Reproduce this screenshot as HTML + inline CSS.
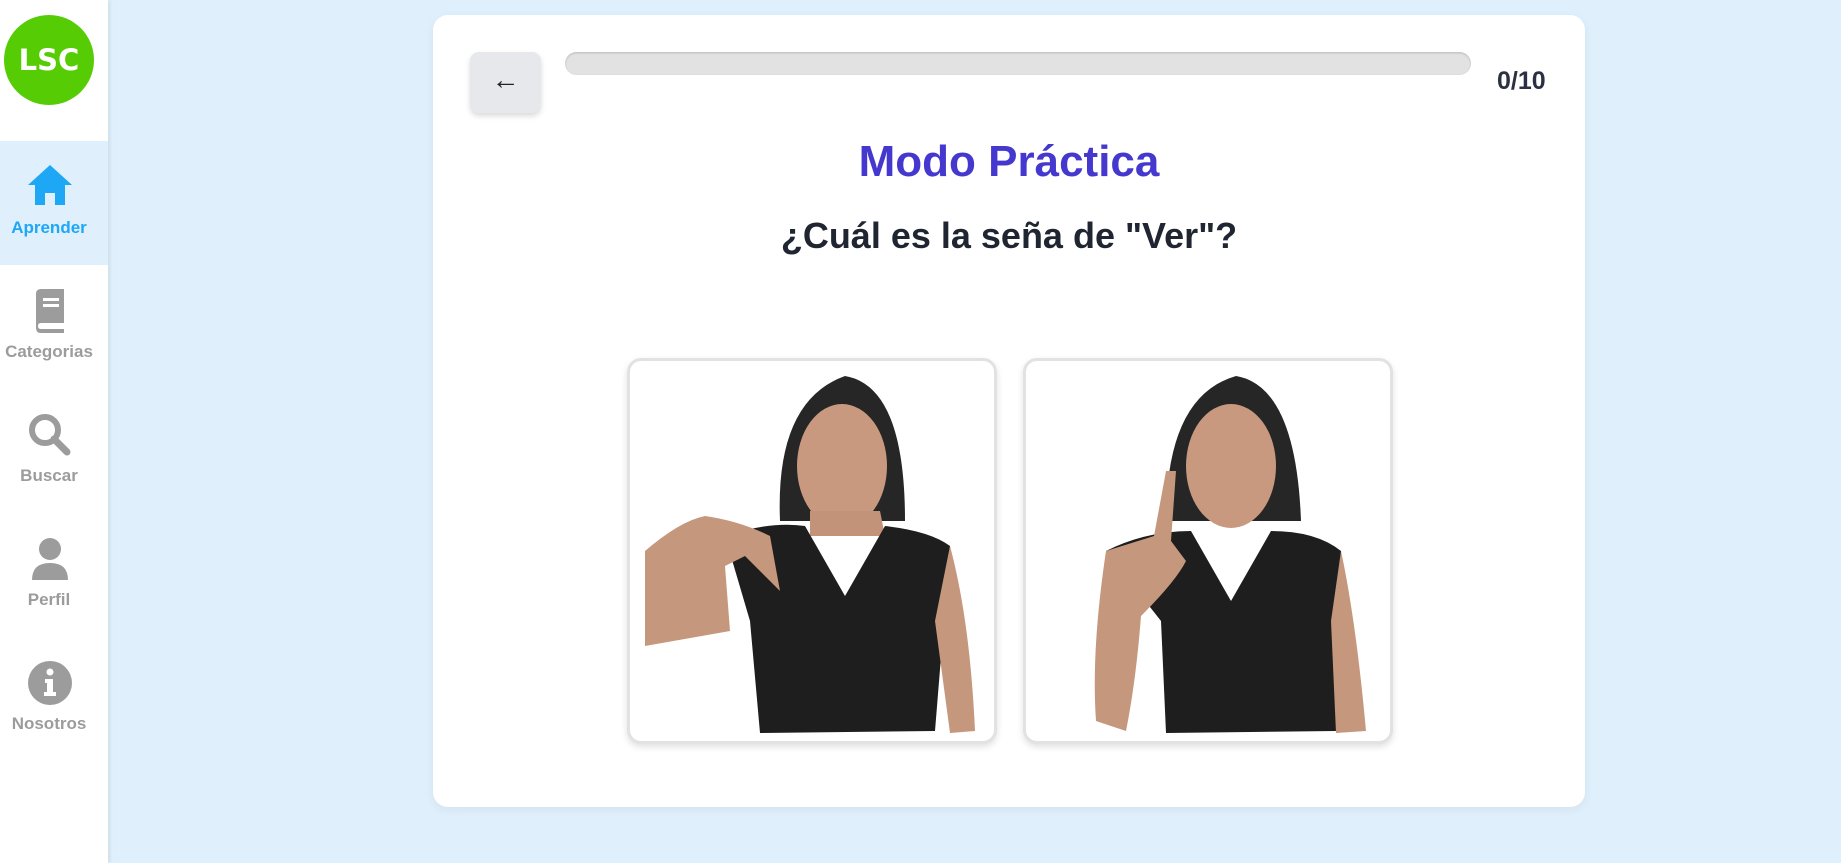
<!DOCTYPE html>
<html><head><meta charset="utf-8"><style>
*{margin:0;padding:0;box-sizing:border-box}
body{width:1841px;height:863px;background:#dff0fc;font-family:"Liberation Sans",sans-serif;position:relative;overflow:hidden}
.side{position:absolute;left:0;top:0;width:108px;height:863px;background:#fff;box-shadow:2px 0 4px rgba(0,0,0,.08)}
.logo{position:absolute;left:4px;top:15px;width:90px;height:90px;border-radius:50%;background:#56cc05;color:#fff;font-size:29px;font-weight:bold;display:flex;align-items:center;justify-content:center;font-family:"DejaVu Sans","Liberation Sans",sans-serif}
.item{position:absolute;left:-5px;width:108px;height:124px;text-align:center;color:#9c9c9c;font-weight:bold;font-size:17px}
.item svg{position:absolute;left:31px;top:22px}
.item span{position:absolute;left:0;right:0;top:77px}
.item.on{background:#dff0fc;color:#1ea7f5;left:0}
.item.on svg{left:26px}
.item.on span{left:-10px}
.card{position:absolute;left:433px;top:15px;width:1152px;height:792px;background:#fff;border-radius:15px;box-shadow:0 3px 10px rgba(0,0,0,.06)}
.back{position:absolute;left:37px;top:37px;width:71px;height:61px;background:#e7e8ec;border-radius:9px;box-shadow:0 3px 6px rgba(0,0,0,.15);font-size:28px;color:#222;display:flex;align-items:center;justify-content:center;padding-bottom:6px}
.bar{position:absolute;left:132px;top:37px;width:906px;height:23px;background:#e2e2e2;border-radius:12px;box-shadow:inset 0 1px 2px rgba(0,0,0,.18)}
.cnt{position:absolute;left:1064px;top:52px;font-size:25px;font-weight:bold;color:#2b3140}
h1{position:absolute;left:0;right:0;top:122px;text-align:center;font-size:44px;color:#4538cf}
h2{position:absolute;left:0;right:0;top:200px;text-align:center;font-size:36px;color:#1f2632}
.opt{position:absolute;top:343px;width:370px;height:386px;border:3px solid #e2e2e2;border-radius:14px;box-shadow:0 3px 7px rgba(0,0,0,.12);background:#fff;overflow:hidden}
</style></head><body>
<div class="side">
<div class="logo">LSC</div>
<div class="item on" style="top:141px"><svg width="48" height="44" viewBox="0 0 48 44"><path d="M24 2 L2 22 H9 V42 H19 V30 H29 V42 H39 V22 H46 Z" fill="#1ea7f5"/></svg><span>Aprender</span></div>
<div class="item" style="top:265px"><svg width="48" height="48" viewBox="0 0 48 48"><path d="M10 7 Q10 2 15 2 H38 V36 H15 Q12 36 12 39 Q12 42 15 42 H38 V46 H15 Q10 46 10 41 Z" fill="#9c9c9c"/><rect x="17" y="11" width="16" height="3" fill="#fff"/><rect x="17" y="17" width="16" height="3" fill="#fff"/></svg><span>Categorias</span></div>
<div class="item" style="top:389px"><svg width="48" height="48" viewBox="0 0 48 48"><circle cx="19" cy="19" r="13" fill="none" stroke="#9c9c9c" stroke-width="6"/><path d="M28 28 L41 41" stroke="#9c9c9c" stroke-width="7" stroke-linecap="round"/></svg><span>Buscar</span></div>
<div class="item" style="top:513px"><svg width="48" height="48" viewBox="0 0 48 48"><circle cx="24" cy="14" r="11" fill="#9c9c9c"/><path d="M6 45 Q6 28 24 28 Q42 28 42 45 Z" fill="#9c9c9c"/></svg><span>Perfil</span></div>
<div class="item" style="top:637px"><svg width="48" height="48" viewBox="0 0 48 48"><circle cx="24" cy="24" r="22" fill="#9c9c9c"/><circle cx="24" cy="13" r="3.5" fill="#fff"/><path d="M19 20 H27 V33 H30 V37 H18 V33 H21 V24 H19 Z" fill="#fff"/></svg><span>Nosotros</span></div>
</div>
<div class="card">
<div class="back">←</div>
<div class="bar"></div>
<div class="cnt">0/10</div>
<h1>Modo Práctica</h1>
<h2>¿Cuál es la seña de "Ver"?</h2>
<div class="opt" style="left:194px"><svg width="370" height="386" viewBox="0 0 370 386">
<path d="M150 160 Q145 40 215 15 Q275 25 275 160 Z" fill="#262626"/>
<ellipse cx="212" cy="105" rx="45" ry="62" fill="#c9997f"/>
<path d="M180 150 L250 150 L255 175 L180 175Z" fill="#c39379"/>
<path d="M95 175 Q140 160 175 165 L215 235 L255 165 Q300 170 320 185 L305 370 L130 372 L120 260 Z" fill="#1e1e1e"/>
<path d="M15 190 Q50 160 75 155 Q110 160 140 175 L150 230 L115 195 L95 205 L100 270 L15 285 Z" fill="#c5977d"/>
<path d="M320 185 Q340 260 345 370 L320 372 L305 260 Z" fill="#c5977d"/>
</svg></div>
<div class="opt" style="left:590px"><svg width="370" height="386" viewBox="0 0 370 386">
<path d="M140 160 Q140 35 210 15 Q270 25 275 160 Z" fill="#262626"/>
<ellipse cx="205" cy="105" rx="45" ry="62" fill="#c9997f"/>
<path d="M80 190 Q120 170 165 170 L205 240 L245 170 Q290 170 315 190 L310 370 L140 372 L135 260 Z" fill="#1e1e1e"/>
<path d="M80 190 Q65 290 70 360 L100 370 Q110 320 115 255 Q150 220 160 200 L145 180 L150 110 L140 110 L128 175 Z" fill="#c5977d"/>
<path d="M315 190 Q330 260 340 370 L310 372 L305 260 Z" fill="#c5977d"/>
</svg></div>
</div>
</body></html>
